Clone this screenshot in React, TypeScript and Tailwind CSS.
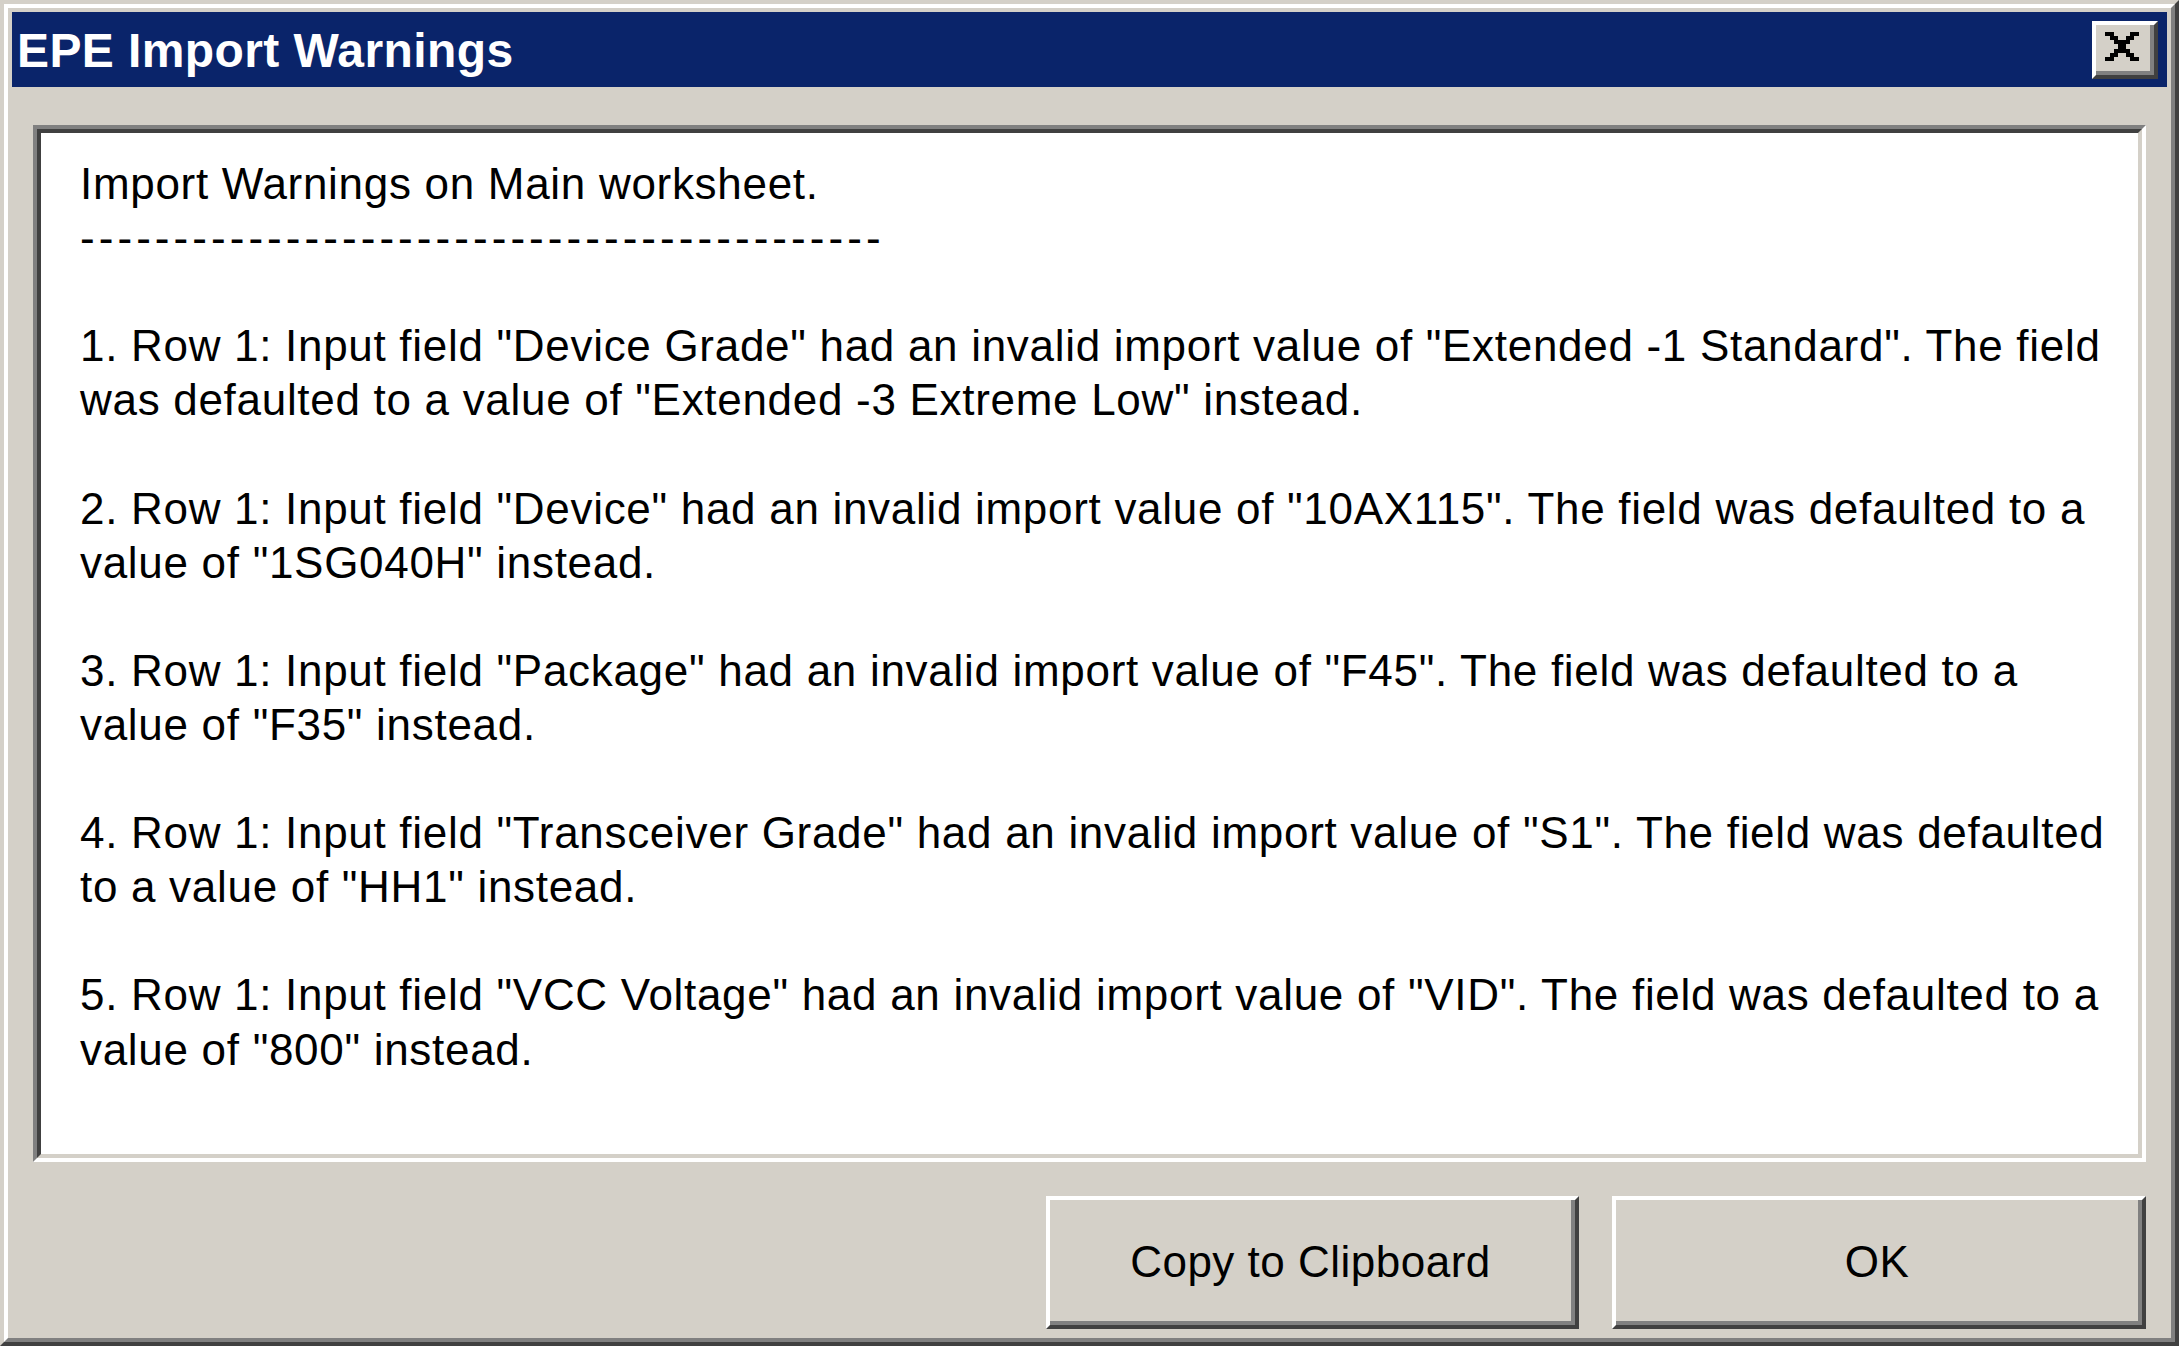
import React from "react";

const lines: string[] = [
  "Import Warnings on Main worksheet.",
  "__DASHES__",
  "",
  '1. Row 1: Input field "Device Grade" had an invalid import value of "Extended -1 Standard". The field',
  'was defaulted to a value of "Extended -3 Extreme Low" instead.',
  "",
  '2. Row 1: Input field "Device" had an invalid import value of "10AX115". The field was defaulted to a',
  'value of "1SG040H" instead.',
  "",
  '3. Row 1: Input field "Package" had an invalid import value of "F45". The field was defaulted to a',
  'value of "F35" instead.',
  "",
  '4. Row 1: Input field "Transceiver Grade" had an invalid import value of "S1". The field was defaulted',
  'to a value of "HH1" instead.',
  "",
  '5. Row 1: Input field "VCC Voltage" had an invalid import value of "VID". The field was defaulted to a',
  'value of "800" instead.',
];

function CloseGlyph() {
  const rows = [
    "XX....XX",
    ".XX..XX.",
    "..XXXX..",
    "...XX...",
    "..XXXX..",
    ".XX..XX.",
    "XX....XX",
  ];
  const rects: React.ReactElement[] = [];
  rows.forEach((r, y) => {
    r.split("").forEach((c, x) => {
      if (c === "X") rects.push(<rect key={`${x}-${y}`} x={x} y={y} width={1} height={1} fill="#000" />);
    });
  });
  return (
    <svg width="34" height="29" viewBox="0 0 8 7" shapeRendering="crispEdges">
      {rects}
    </svg>
  );
}

function Button({ label, w }: { label: string; w: string }) {
  return (
    <div className={`${w} h-[133px] border-l-4 border-t-4 border-r-4 border-b-4 border-l-white border-t-white border-r-[#404040] border-b-[#404040]`}>
      <div className="h-full w-full border-r-4 border-b-4 border-r-[#808080] border-b-[#808080] flex items-center justify-center bg-[#d4d0c8] pt-[3px]">
        <span className="text-black text-[44px] tracking-[0.5px] leading-none font-['Liberation_Sans',Arial,sans-serif]">
          {label}
        </span>
      </div>
    </div>
  );
}

export default function App() {
  return (
    <div className="w-[2179px] h-[1346px] bg-[#d4d0c8] border-4 border-t-[#d4d0c8] border-l-[#d4d0c8] border-r-[#404040] border-b-[#404040] font-['Liberation_Sans',Arial,sans-serif]">
      <div className="w-full h-full border-4 border-t-white border-l-white border-r-[#808080] border-b-[#808080] p-[4px] flex flex-col">
        {/* Title bar */}
        <div className="h-[75px] bg-[#0a246a] flex items-center justify-between pl-[5px] pr-[9px]">
          <span className="text-white font-bold text-[48px] leading-none pt-[3px] tracking-[0.4px]">
            EPE Import Warnings
          </span>
          <div className="w-[66px] h-[58px] border-l-4 border-t-4 border-r-4 border-b-4 border-l-white border-t-white border-r-[#404040] border-b-[#404040]">
            <div className="w-full h-full bg-[#d4d0c8] border-r-4 border-b-4 border-r-[#808080] border-b-[#808080] flex items-center justify-center pr-[2px] pb-[2px]">
              <CloseGlyph />
            </div>
          </div>
        </div>

        {/* Text box */}
        <div className="mt-[38px] mx-[21px] h-[1037px] border-4 border-t-[#808080] border-l-[#808080] border-r-white border-b-white">
          <div className="w-full h-full border-4 border-t-[#404040] border-l-[#404040] border-r-[#d4d0c8] border-b-[#d4d0c8] bg-white pl-[39px] pt-[24px]">
            {lines.map((l, i) =>
              l === "__DASHES__" ? (
                <div key={i} className="h-[54.1px] leading-[54.1px] text-[44px] text-black whitespace-pre tracking-[4.06px]">
                  {"-".repeat(43)}
                </div>
              ) : (
                <div key={i} className="h-[54.1px] leading-[54.1px] text-[44px] text-black whitespace-pre tracking-[0.7px]">
                  {l === "" ? "\u00a0" : l}
                </div>
              )
            )}
          </div>
        </div>

        {/* Buttons */}
        <div className="mt-[34px] mr-[21px] flex justify-end gap-[33px]">
          <Button label="Copy to Clipboard" w="w-[533px]" />
          <Button label="OK" w="w-[534px]" />
        </div>
      </div>
    </div>
  );
}
